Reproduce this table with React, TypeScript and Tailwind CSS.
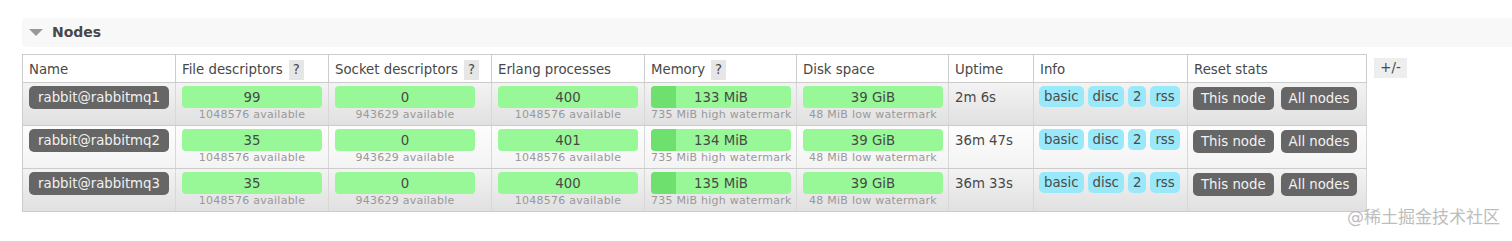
import React from 'react';

interface NodeRow {
  name: string;
  fd: number;
  sockets: number;
  procs: number;
  memory: string;
  disk: string;
  uptime: string;
}

const nodes: NodeRow[] = [
  { name: 'rabbit@rabbitmq1', fd: 99, sockets: 0, procs: 400, memory: '133 MiB', disk: '39 GiB', uptime: '2m 6s' },
  { name: 'rabbit@rabbitmq2', fd: 35, sockets: 0, procs: 401, memory: '134 MiB', disk: '39 GiB', uptime: '36m 47s' },
  { name: 'rabbit@rabbitmq3', fd: 35, sockets: 0, procs: 400, memory: '135 MiB', disk: '39 GiB', uptime: '36m 33s' },
];

const Help = () => (
  <span className="ml-[6px] inline-block h-[20px] w-[15px] bg-[#e6e6e6] text-center leading-[20px] align-middle">?</span>
);

// green status bar with the small caption underneath
const Bar = ({ value, sub, used }: { value: string | number; sub: string; used?: boolean }) => (
  <div className="w-[140px]">
    <div className="relative h-[22px] overflow-hidden rounded-[4px] bg-[#98f898] text-center leading-[23px] text-[#484848]">
      {used && <div className="absolute left-0 top-0 h-full w-[25px] bg-[#6ee06e]" />}
      <span className="relative">{value}</span>
    </div>
    <div className="whitespace-nowrap text-center text-[11px] leading-[14px] tracking-[0.25px] text-[#999]">{sub}</div>
  </div>
);

const Badge = ({ children }: { children: React.ReactNode }) => (
  <span className="inline-block h-[21px] shrink-0 rounded-[5px] bg-[#99e9fb] px-[5px] leading-[21px] whitespace-nowrap text-[#4a4a4a]">{children}</span>
);

const DarkButton = ({ children, className = '' }: { children: React.ReactNode; className?: string }) => (
  <span className={`inline-block h-[23px] shrink-0 whitespace-nowrap rounded-[5px] bg-[#666] leading-[23px] text-[#f2f2f2] ${className}`}>{children}</span>
);

const App: React.FC = () => {
  const headers: { label: string; help?: boolean }[] = [
    { label: 'Name' },
    { label: 'File descriptors', help: true },
    { label: 'Socket descriptors', help: true },
    { label: 'Erlang processes' },
    { label: 'Memory', help: true },
    { label: 'Disk space' },
    { label: 'Uptime' },
    { label: 'Info' },
    { label: 'Reset stats' },
  ];
  const widths = [153, 153, 163, 153, 152, 152, 85, 154, 179];

  return (
    <div className="relative h-[241px] bg-white pl-[22px] pt-[18px] text-[13.3px] text-[#484848]" style={{ fontFamily: '"DejaVu Sans", Verdana, sans-serif' }}>
      <div className="flex h-[29px] items-center rounded-l-[4px] bg-[#f8f8f8] pl-[7px]">
        <span className="mr-[9px] h-0 w-0 border-x-[7px] border-t-[7px] border-x-transparent border-t-[#999]" />
        <span className="text-[14px] font-bold">Nodes</span>
      </div>

      <div className="mt-[7px] flex items-start">
        <table className="table-fixed border-collapse border border-[#ccc]" style={{ width: 1344 }}>
          <colgroup>
            {widths.map((w, i) => (
              <col key={i} style={{ width: w }} />
            ))}
          </colgroup>
          <thead>
            <tr className="bg-white">
              {headers.map((h) => (
                <th key={h.label} className="h-[28px] border border-[#ccc] px-[6px] pt-[2px] text-left font-normal leading-[20px] whitespace-nowrap">
                  {h.label}
                  {h.help && <Help />}
                </th>
              ))}
            </tr>
          </thead>
          <tbody>
            {nodes.map((n, i) => (
              <tr
                key={n.name}
                className={i % 2 === 0 ? 'bg-gradient-to-b from-[#f3f3f3] to-[#e0e0e0]' : 'bg-gradient-to-b from-[#fdfdfd] to-[#f3f3f3]'}
              >
                <td className="h-[43px] border-y border-[#ccc] border-x-[#d8d8d8] px-[6px] pb-[3px] pt-[3px] align-top">
                  <DarkButton className="w-[140px] text-center">{n.name}</DarkButton>
                </td>
                <td className="border-y border-[#ccc] border-x border-x-[#d8d8d8] px-[6px] pt-[3px] align-top">
                  <Bar value={n.fd} sub="1048576 available" />
                </td>
                <td className="border-y border-[#ccc] border-x border-x-[#d8d8d8] px-[6px] pt-[3px] align-top">
                  <Bar value={n.sockets} sub="943629 available" />
                </td>
                <td className="border-y border-[#ccc] border-x border-x-[#d8d8d8] px-[6px] pt-[3px] align-top">
                  <Bar value={n.procs} sub="1048576 available" />
                </td>
                <td className="border-y border-[#ccc] border-x border-x-[#d8d8d8] px-[6px] pt-[3px] align-top">
                  <Bar value={n.memory} sub="735 MiB high watermark" used />
                </td>
                <td className="border-y border-[#ccc] border-x border-x-[#d8d8d8] px-[6px] pt-[3px] align-top">
                  <Bar value={n.disk} sub="48 MiB low watermark" />
                </td>
                <td className="border-y border-[#ccc] border-x border-x-[#d8d8d8] px-[6px] pt-[3px] align-top leading-[24px] whitespace-nowrap">
                  {n.uptime}
                </td>
                <td className="border-y border-[#ccc] border-x border-x-[#d8d8d8] px-[5px] pt-[3px] align-top">
                  <div className="flex gap-[4px]">
                    <Badge>basic</Badge>
                    <Badge>disc</Badge>
                    <Badge>2</Badge>
                    <Badge>rss</Badge>
                  </div>
                </td>
                <td className="border-y border-[#ccc] border-x border-x-[#d8d8d8] px-[5px] pt-[4px] align-top">
                  <div className="flex gap-[7px]">
                    <DarkButton className="px-[8px]">This node</DarkButton>
                    <DarkButton className="px-[8px]">All nodes</DarkButton>
                  </div>
                </td>
              </tr>
            ))}
          </tbody>
        </table>
        <span className="ml-[7px] mt-[4px] inline-block h-[20px] w-[33px] bg-[#eee] text-center leading-[20px]">+/-</span>
      </div>

      <div
        className="absolute bottom-[11px] right-[12px] text-[17px] text-[#bdbdbd]"
        style={{ fontFamily: '"DejaVu Sans", "Noto Sans CJK SC", sans-serif' }}
      >
        @稀土掘金技术社区
      </div>
    </div>
  );
};

export default App;
